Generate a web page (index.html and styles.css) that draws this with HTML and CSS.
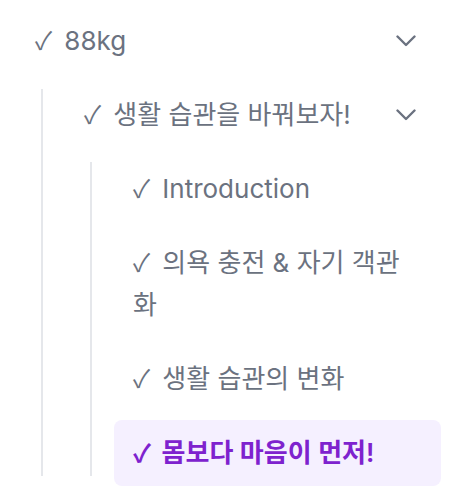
FILE: index.html
```html
<!DOCTYPE html>
<html lang="ko">
<head>
<meta charset="utf-8">
<link rel="stylesheet" href="styles.css">
</head>
<body>
<nav class="tree">
  <div class="item">
    <span class="label"><span class="check">✓</span> 88kg</span>
    <svg class="chev" viewBox="0 0 20 12"><path d="M1.5 1.5 L10 10 L18.5 1.5"/></svg>
  </div>
  <div class="children">
    <div class="item">
      <span class="label"><span class="check">✓</span> 생활 습관을 바꿔보자!</span>
      <svg class="chev" viewBox="0 0 20 12"><path d="M1.5 1.5 L10 10 L18.5 1.5"/></svg>
    </div>
    <div class="children">
      <div class="item"><span class="label"><span class="check">✓</span> Introduction</span></div>
      <div class="item"><span class="label"><span class="check">✓</span> 의욕 충전 &amp; 자기 객관화</span></div>
      <div class="item"><span class="label"><span class="check">✓</span> 생활 습관의 변화</span></div>
      <div class="item active"><span class="label"><span class="check">✓</span> 몸보다 마음이 먼저!</span></div>
    </div>
  </div>
</nav>
</body>
</html>
```
FILE: styles.css
```css
html, body {
  margin: 0;
  background: #ffffff;
}
body {
  padding: 8px 22px 0 16px;
  font-family: Inter, "Noto Sans CJK KR", sans-serif;
  font-size: 26px;
  line-height: 42px;
  color: #6b7280;
}
.tree {
  display: flex;
  flex-direction: column;
  gap: 8px;
}
.item {
  display: flex;
  justify-content: space-between;
  align-items: flex-start;
  padding: 12px 25px 12px 19px;
  border-radius: 8px;
}
.label {
  flex: 1;
}
.check {
  display: inline-block;
  width: 22px;
  font-family: "Noto Sans CJK KR", "DejaVu Sans", sans-serif;
  font-size: 25px;
  line-height: 24px;
}
.chev {
  width: 20px;
  height: 12px;
  margin-top: 15px;
  flex: none;
}
.chev path {
  fill: none;
  stroke: #6b7280;
  stroke-width: 2.4;
  stroke-linecap: round;
  stroke-linejoin: round;
}
.children {
  position: relative;
  display: flex;
  flex-direction: column;
  gap: 8px;
  margin-left: 25px;
  padding-left: 24px;
}
.children::before {
  content: "";
  position: absolute;
  left: 0;
  top: 7px;
  bottom: 10px;
  width: 2px;
  background: #e5e7eb;
}
.children .children::before {
  top: 6px;
}
.active {
  background: #f5f0ff;
  color: #7e22ce;
  font-weight: 600;
}
```
